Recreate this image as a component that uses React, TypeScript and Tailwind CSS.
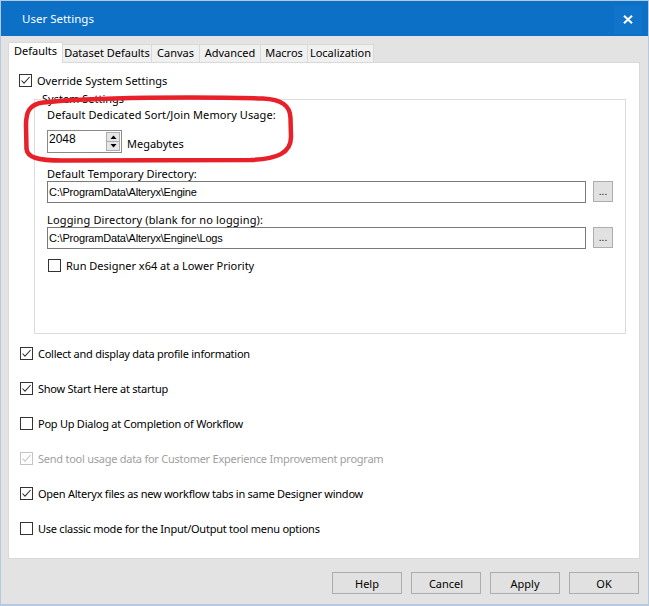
import React from 'react';

const Box: React.FC<{ checked?: boolean; disabled?: boolean }> = ({ checked, disabled }) => (
  <span
    className={`w-[13px] h-[13px] border bg-white flex items-center justify-center shrink-0 ${
      disabled ? 'border-[#c4c4c4]' : 'border-[#333333]'
    }`}
  >
    {checked && (
      <svg width="11" height="11" viewBox="0 0 11 11">
        <path d="M1.5 5.5 L4 8.2 L9.6 2" stroke={disabled ? '#c4c4c4' : '#333333'} strokeWidth="1.1" fill="none" />
      </svg>
    )}
  </span>
);

const CheckRow: React.FC<{ label: string; checked?: boolean; disabled?: boolean; className?: string; tight?: boolean }> = ({
  label,
  checked,
  disabled,
  className = '',
  tight,
}) => (
  <div className={`flex items-center h-[13px] ${className}`}>
    <Box checked={checked} disabled={disabled} />
    <span
      className={`ml-[5px] leading-[15px] whitespace-nowrap ${tight ? 'tracking-[-0.25px]' : ''} ${
        disabled ? 'text-[#a0a0a0]' : 'text-black'
      }`}
    >
      {label}
    </span>
  </div>
);

const PathField: React.FC<{ value: string }> = ({ value }) => (
  <div className="flex items-start">
    <div className="w-[539px] h-[22px] border border-[#7a7a7a] bg-white flex items-center pl-[1px] font-['Liberation_Sans',sans-serif] text-[11px] tracking-[-0.2px] text-black">
      {value}
    </div>
    <button className="ml-[7px] w-[20px] h-[21px] border border-[#adadad] bg-[#e1e1e1] flex items-end justify-center pb-[4px] text-[10px] leading-none text-black font-['Liberation_Sans',sans-serif]">
      ...
    </button>
  </div>
);

const tabs = [
  { name: 'Dataset Defaults', w: 'w-[89px]' },
  { name: 'Canvas', w: 'w-[48px]' },
  { name: 'Advanced', w: 'w-[61px]' },
  { name: 'Macros', w: 'w-[47px]' },
  { name: 'Localization', w: 'w-[66px]' },
];

const DialogButton: React.FC<{ label: string }> = ({ label }) => (
  <button className="w-[70px] h-[22px] border border-[#adadad] bg-[#e1e1e1] text-black leading-none">{label}</button>
);

export default function App() {
  return (
    <div className="relative w-[649px] h-[606px] flex flex-col border border-[#b6c9e2] border-b-2 bg-[#e3e3e3] font-['Noto_Sans',sans-serif] text-[11px] text-black overflow-hidden">
      {/* Title bar */}
      <div className="h-[35px] bg-[#0b70c6] flex items-center justify-between pl-[21px] pr-[6px] shrink-0">
        <span className="text-white text-[11.5px] pt-[1px]">User Settings</span>
        <div className="w-[28px] h-[29px] mt-[2px] bg-[#0f74ca] flex items-center justify-center">
          <svg width="10" height="9" viewBox="0 0 10 9">
            <path d="M1 0.8 L9 8.2 M9 0.8 L1 8.2" stroke="#ffffff" strokeWidth="2.1" />
          </svg>
        </div>
      </div>

      <div className="flex-1 flex flex-col pl-[7px] pr-[8px] pt-[6px]">
        {/* Tabs */}
        <div className="relative z-10 flex items-end h-[20px]">
          <div className="w-[55px] h-[21px] -mb-px bg-white border border-b-0 border-[#d9d9d9] flex items-center justify-center pb-[3px]">
            Defaults
          </div>
          {tabs.map((t) => (
            <div
              key={t.name}
              className={`${t.w} h-[18px] bg-[#f0f0f0] border-t border-r border-[#d9d9d9] flex items-center justify-center`}
            >
              {t.name}
            </div>
          ))}
        </div>

        {/* Panel */}
        <div className="h-[497px] bg-white border border-[#d9d9d9] flex flex-col">
          <CheckRow label="Override System Settings" checked className="mt-[11px] ml-[10px]" />

          {/* Group box */}
          <div className="relative mt-[12px] ml-[25px] w-[592px] h-[235px] border border-[#dcdcdc] flex flex-col pl-[12px]">
            <span className="absolute left-[6px] -top-[9px] bg-white px-[1px] leading-[15px]">System Settings</span>
            <div className="mt-[7px] leading-[15px] h-[15px] tracking-[0.1px]">Default Dedicated Sort/Join Memory Usage:</div>
            <div className="mt-[8px] flex items-start">
              <div className="relative w-[75px] h-[23px] border border-[#8a8a8a] bg-white font-['Liberation_Sans',sans-serif] text-[12px] pl-[1px] pt-[1px] leading-[15px]">
                2048
                <div className="absolute right-[1px] top-[1px] w-[14px] h-[19px] flex flex-col">
                  <div className="flex-1 border border-[#adadad] bg-[#e6e6e6] flex items-center justify-center">
                    <svg width="7" height="4" viewBox="0 0 7 4">
                      <path d="M0.5 4 L3.5 0.5 L6.5 4 Z" fill="#000" />
                    </svg>
                  </div>
                  <div className="flex-1 border border-t-0 border-[#adadad] bg-[#e6e6e6] flex items-center justify-center">
                    <svg width="7" height="4" viewBox="0 0 7 4">
                      <path d="M0.5 0 L6.5 0 L3.5 3.5 Z" fill="#000" />
                    </svg>
                  </div>
                </div>
              </div>
              <span className="ml-[5px] mt-[6px] leading-[15px]">Megabytes</span>
            </div>

            <div className="mt-[13px] leading-[15px] h-[15px]">Default Temporary Directory:</div>
            <PathField value="C:\ProgramData\Alteryx\Engine" />

            <div className="mt-[9px] leading-[15px] h-[15px] tracking-[0.15px]">Logging Directory (blank for no logging):</div>
            <PathField value="C:\ProgramData\Alteryx\Engine\Logs" />

            <CheckRow label="Run Designer x64 at a Lower Priority" className="mt-[10px] ml-[1px]" />
          </div>

          <div className="flex flex-col gap-[22px] mt-[13px] ml-[11px]">
            <CheckRow label="Collect and display data profile information" checked tight />
            <CheckRow label="Show Start Here at startup" checked tight />
            <CheckRow label="Pop Up Dialog at Completion of Workflow" tight />
            <CheckRow label="Send tool usage data for Customer Experience Improvement program" checked disabled tight />
            <CheckRow label="Open Alteryx files as new workflow tabs in same Designer window" checked tight />
            <CheckRow label="Use classic mode for the Input/Output tool menu options" tight />
          </div>
        </div>

        {/* Buttons */}
        <div className="mt-[13px] flex justify-end gap-[9px] pr-[1px]">
          <DialogButton label="Help" />
          <DialogButton label="Cancel" />
          <DialogButton label="Apply" />
          <DialogButton label="OK" />
        </div>
      </div>

      {/* Red annotation */}
      <svg className="absolute left-0 top-0 pointer-events-none" width="649" height="606" viewBox="0 0 649 606">
        <path
          d="M262 97.5 C200 95.5 90 96 42 101.5 C28 103.5 25 111 25 124 L25.5 148 C26.5 156 35 159.5 62 159.5 L250 159 C276 158 290 152 290 136 L289.5 117 C289 104 280 98.5 262 97.5 Z"
          stroke="#e8202a"
          strokeWidth="4.5"
          fill="none"
        />
      </svg>
    </div>
  );
}
